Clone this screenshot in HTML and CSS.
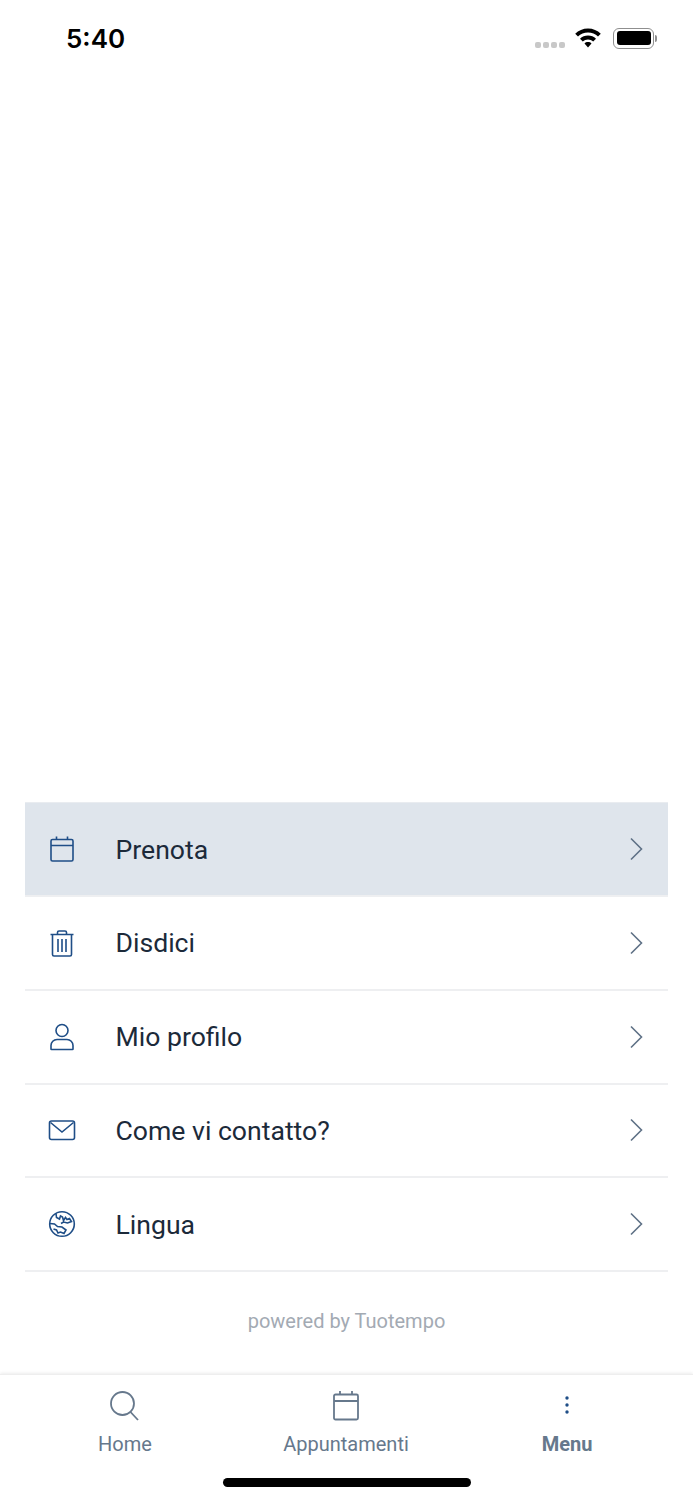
FILE: index.html
```html
<html>
<head>
  <title>Menu</title>
  <link rel="stylesheet" href="styles.css">
</head>
<body>
  <div class="page">
    <div class="status-bar">
      <span class="clock">5:40</span>
      <div class="status-icons">
        <div class="signal"><i></i><i></i><i></i><i></i></div>
        <svg class="wifi" width="28" height="22" viewBox="0 0 28 22">
          <path d="M14 1.500c5 0 9.500 2 12.800 5.200L24 9.600c-2.600-2.500-6.100-4-10-4S6.600 7.100 4 9.600L1.200 6.700C4.500 3.500 9 1.500 14 1.500z" fill="#000"/>
          <path d="M14 8.500c3.100 0 5.900 1.200 8 3.200l-2.800 2.900c-1.400-1.300-3.200-2.100-5.200-2.100s-3.800.8-5.200 2.100L6 11.700c2.100-2 4.900-3.200 8-3.200z" fill="#000"/>
          <path d="M14 15c1.400 0 2.600.5 3.500 1.400L14 20.500l-3.500-4.100c.9-.9 2.100-1.400 3.500-1.400z" fill="#000"/>
        </svg>
        <div class="battery"><div class="battery-level"></div></div>
        <div class="battery-cap"></div>
      </div>
    </div>

    <div class="spacer"></div>

    <ul class="menu">
      <li class="menu-row selected">
        <svg class="menu-icon" width="28" height="28" viewBox="0 0 28 28" fill="none" stroke="#1f4e87" stroke-width="1.600">
          <rect x="3" y="4.500" width="22" height="21.500" rx="1.500"/>
          <path d="M3 10.500h22M8.500 1.500v3M19.500 1.500v3"/>
        </svg>
        <span class="menu-label">Prenota</span>
        <svg class="chevron" width="14" height="24" viewBox="0 0 14 24" fill="none" stroke="#5f7186" stroke-width="1.600"><path d="M2 1.500L12.500 12 2 22.500"/></svg>
      </li>
      <li class="menu-row">
        <svg class="menu-icon" width="28" height="28" viewBox="0 0 28 28" fill="none" stroke="#1f4e87" stroke-width="1.600">
          <path d="M2.500 5.500h23M9.500 5.500V3.500a1.500 1.500 0 0 1 1.500-1.500h6a1.500 1.500 0 0 1 1.500 1.500v2M4.500 5.500V25.500a1.500 1.500 0 0 0 1.500 1.500h16a1.500 1.500 0 0 0 1.500-1.500V5.500M10 10v13M14 10v13M18 10v13"/>
        </svg>
        <span class="menu-label">Disdici</span>
        <svg class="chevron" width="14" height="24" viewBox="0 0 14 24" fill="none" stroke="#5f7186" stroke-width="1.600"><path d="M2 1.500L12.500 12 2 22.500"/></svg>
      </li>
      <li class="menu-row">
        <svg class="menu-icon" width="28" height="28" viewBox="0 0 28 28" fill="none" stroke="#1f4e87" stroke-width="1.600">
          <circle cx="14" cy="7.500" r="6"/>
          <path d="M3 26v-3.500a6 6 0 0 1 6-6h10a6 6 0 0 1 6 6V26a.5.5 0 0 1-.5.500h-21A.5.5 0 0 1 3 26z"/>
        </svg>
        <span class="menu-label">Mio profilo</span>
        <svg class="chevron" width="14" height="24" viewBox="0 0 14 24" fill="none" stroke="#5f7186" stroke-width="1.600"><path d="M2 1.500L12.500 12 2 22.500"/></svg>
      </li>
      <li class="menu-row">
        <svg class="menu-icon" width="28" height="28" viewBox="0 0 28 28" fill="none" stroke="#1f4e87" stroke-width="1.600">
          <rect x="1.500" y="5" width="25" height="18.500" rx="2"/>
          <path d="M2.500 6.500l11.500 9.500 11.500-9.500"/>
        </svg>
        <span class="menu-label">Come vi contatto?</span>
        <svg class="chevron" width="14" height="24" viewBox="0 0 14 24" fill="none" stroke="#5f7186" stroke-width="1.600"><path d="M2 1.500L12.500 12 2 22.500"/></svg>
      </li>
      <li class="menu-row">
        <svg class="menu-icon" width="28" height="28" viewBox="0 0 28 28" fill="none" stroke="#1f4e87" stroke-width="1.600">
          <circle cx="14" cy="14" r="12.300"/>
          <path d="M8 3.500l.5 4 3 1.500 1-3 2 1 1 3.500 2-3 1.500 2 2.500-1 2 3-4 1.500-4-1-2.500 1.500"/>
          <path d="M2 13.500l4.500.5 3 2.500 4.500.5 4 3-2 3.500-3.500-1.500-2.500 1-1.500-3-3-1"/>
        </svg>
        <span class="menu-label">Lingua</span>
        <svg class="chevron" width="14" height="24" viewBox="0 0 14 24" fill="none" stroke="#5f7186" stroke-width="1.600"><path d="M2 1.500L12.500 12 2 22.500"/></svg>
      </li>
    </ul>

    <div class="powered">powered by Tuotempo</div>

    <div class="tab-bar">
      <div class="tabs">
        <div class="tab">
          <svg width="32" height="32" viewBox="0 0 32 32" fill="none" stroke="#66788c" stroke-width="1.800">
            <circle cx="13.500" cy="13.500" r="11.500"/>
            <path d="M21.500 22l7.500 8"/>
          </svg>
          <span>Home</span>
        </div>
        <div class="tab">
          <svg width="32" height="32" viewBox="0 0 32 32" fill="none" stroke="#66788c" stroke-width="1.800">
            <rect x="4" y="4.500" width="24" height="25" rx="1.500"/>
            <path d="M4 11h24M10 1v3.500M22 1v3.500"/>
          </svg>
          <span>Appuntamenti</span>
        </div>
        <div class="tab active">
          <svg width="32" height="32" viewBox="0 0 32 32" fill="#1f4e87">
            <circle cx="16" cy="8" r="1.700"/>
            <circle cx="16" cy="15" r="1.700"/>
            <circle cx="16" cy="22" r="1.700"/>
          </svg>
          <span>Menu</span>
        </div>
      </div>
      <div class="home-indicator"></div>
    </div>
  </div>
</body>
</html>
```

FILE: styles.css
```css
* {
  box-sizing: border-box;
}

body {
  margin: 0;
  background-color: #fff;
  font-family: Roboto, Arial, sans-serif;
  color: #1c2a3a;
}

.page {
  display: flex;
  flex-direction: column;
  height: 1500px;
}

.status-bar {
  display: flex;
  align-items: center;
  justify-content: space-between;
  height: 76px;
  padding: 0 36px 0 66px;
}

.clock {
  font-family: Inter, Arial, sans-serif;
  font-size: 26px;
  font-weight: 600;
  color: #000;
}

.status-icons {
  display: flex;
  align-items: center;
}

.signal {
  display: flex;
  gap: 2px;
  margin: 13px 9px 0 0;
}

.signal i {
  width: 6px;
  height: 6px;
  border-radius: 2px;
  background-color: #c8c8c8;
}

.wifi {
  margin-right: 11px;
}

.battery {
  width: 41px;
  height: 21px;
  padding: 2.500px;
  border: 1.500px solid #8f8f8f;
  border-radius: 6px;
}

.battery-level {
  height: 100%;
  border-radius: 3px;
  background-color: #000;
}

.battery-cap {
  width: 2px;
  height: 7px;
  margin-left: 1px;
  border-radius: 0 2px 2px 0;
  background-color: #8f8f8f;
}

.spacer {
  flex: 1;
}

.menu {
  margin: 0 25px;
  padding: 0;
  list-style: none;
  border-top: 1px solid #e9ecf0;
}

.menu-row {
  display: flex;
  align-items: center;
  height: 93.750px;
  padding: 0 25px 0 23px;
  border-bottom: 2px solid #eeeff1;
}

.menu-row.selected {
  background-color: #dfe5ec;
}

.menu-icon {
  flex: none;
}

.menu-label {
  flex: 1;
  margin-left: 39.500px;
  font-size: 26.600px;
}

.powered {
  margin-top: 37px;
  text-align: center;
  font-size: 20px;
  line-height: 24px;
  color: #a3aab3;
}

.tab-bar {
  margin-top: 41px;
  height: 126px;
  border-top: 1px solid #eee;
  box-shadow: 0 -1px 3px rgba(0, 0, 0, 0.08);
}

.tabs {
  display: flex;
  justify-content: center;
  padding: 15px 1px 0 0;
}

.tab {
  display: flex;
  flex-direction: column;
  align-items: center;
  width: 221px;
  font-size: 20px;
  color: #66788c;
}

.tab span {
  margin-top: 10px;
  line-height: 24px;
}

.tab.active span {
  font-weight: 700;
}

.home-indicator {
  width: 248px;
  height: 9px;
  margin: 22px auto 0;
  border-radius: 5px;
  background-color: #000;
}
```
